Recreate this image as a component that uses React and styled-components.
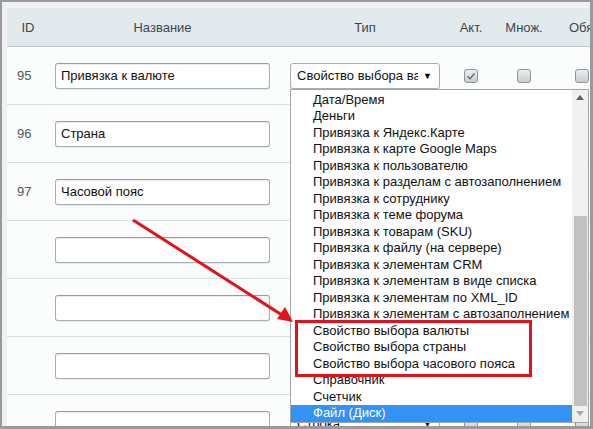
import React from "react";
import styled, { createGlobalStyle } from "styled-components";

const Global = createGlobalStyle`
  html, body { margin: 0; padding: 0; background: #9a9a9a; }
  body { font-family: "Liberation Sans", Arial, sans-serif; }
`;

const Frame = styled.div`
  position: relative;
  box-sizing: border-box;
  width: 593px;
  height: 429px;
  overflow: hidden;
  border-style: solid;
  border-color: #9a9a9a;
  border-width: 2px 3px 3px 2px;
  background: #eef2f4;
  padding: 6px 0 0 5px;
`;

const Table = styled.div`
  width: 640px;
  background: #fbfcfc;
`;

const COLS = "42px 227px 178px 34px 72px 87px";

const HeaderRow = styled.div`
  display: grid;
  grid-template-columns: ${COLS};
  height: 38px;
  align-items: center;
  background: #e3eaed;
  border-bottom: 1px solid #bcc6cb;
`;

const HeadCell = styled.div`
  font-size: 13px;
  color: #3b464d;
  text-align: ${(p) => (p.$left ? "left" : "center")};
  padding-left: ${(p) => p.$pad || 0}px;
  white-space: nowrap;
`;

const Row = styled.div`
  display: grid;
  grid-template-columns: ${COLS};
  height: 57px;
  align-items: center;
  border-bottom: 1px solid #d9e0e3;
`;

const IdCell = styled.div`
  font-size: 13px;
  color: #555;
  padding-left: 10px;
`;

const NameCell = styled.div`
  padding-left: 6px;
`;

const TextInput = styled.div`
  box-sizing: border-box;
  width: 215px;
  height: 26px;
  background: #fff;
  border: 1px solid #a5aeb5;
  border-top-color: #949da4;
  border-radius: 3px;
  box-shadow: inset 0 1px 1px rgba(0, 0, 0, 0.08), 0 1px 0 #e6ebee;
  font-size: 13px;
  line-height: 24px;
  color: #111;
  padding-left: 5px;
`;

const TypeCell = styled.div`
  position: relative;
  padding-left: 14px;
`;

const SelectBox = styled.div`
  box-sizing: border-box;
  width: 150px;
  height: 26px;
  background: #fff;
  border: 1px solid #a5aeb5;
  border-radius: 3px;
  box-shadow: 0 1px 0 #e6ebee;
  display: flex;
  align-items: center;
  font-size: 13px;
  color: #111;
  padding-left: 6px;
`;

const SelectText = styled.span`
  width: 121px;
  overflow: hidden;
  white-space: nowrap;
  flex-shrink: 0;
`;

const SelectArrow = styled.span`
  font-size: 9px;
  margin-left: 5px;
  color: #000;
`;

const CheckCell = styled.div`
  display: flex;
  justify-content: ${(p) => p.$justify || "center"};
  padding-left: ${(p) => p.$pad || 0}px;
`;

const Check = styled.div`
  box-sizing: border-box;
  width: 14px;
  height: 14px;
  border-radius: 3px;
  border: 1px solid #8c949a;
  background: linear-gradient(#eceef0, #c9cdd0);
  display: flex;
  align-items: center;
  justify-content: center;
`;

const Dropdown = styled.div`
  position: absolute;
  left: 14px;
  top: calc(50% + 13px);
  z-index: 5;
  box-sizing: border-box;
  width: 299px;
  height: 334px;
  background: #fff;
  border: 1px solid #a4a4a4;
  display: flex;
`;

const OptionList = styled.div`
  flex: 1;
  padding-top: 2px;
  overflow: hidden;
`;

const Option = styled.div`
  height: 16.5px;
  line-height: 16.5px;
  font-size: 13px;
  color: ${(p) => (p.$active ? "#fff" : "#111")};
  background: ${(p) => (p.$active ? "#3392f5" : "transparent")};
  padding-left: 22px;
  white-space: nowrap;
`;

const Scrollbar = styled.div`
  width: 16px;
  background: #f0f0f0;
  display: flex;
  flex-direction: column;
  align-items: center;
`;

const ScrollBtn = styled.div`
  height: 16px;
  width: 16px;
  display: flex;
  align-items: center;
  justify-content: center;
`;

const Track = styled.div`
  flex: 1;
  width: 100%;
  display: flex;
  flex-direction: column;
  justify-content: flex-end;
  align-items: center;
`;

const Thumb = styled.div`
  width: 13px;
  height: 190px;
  background: #c1c1c1;
`;

const Annotation = styled.div`
  position: absolute;
  left: 293px;
  top: 318px;
  width: 237px;
  height: 57px;
  box-sizing: border-box;
  border: 3px solid #e2121b;
  z-index: 6;
`;

const ArrowSvg = styled.svg`
  position: absolute;
  left: -2px;
  top: -2px;
  z-index: 6;
  pointer-events: none;
`;

const options = [
  "Дата/Время",
  "Деньги",
  "Привязка к Яндекс.Карте",
  "Привязка к карте Google Maps",
  "Привязка к пользователю",
  "Привязка к разделам с автозаполнением",
  "Привязка к сотруднику",
  "Привязка к теме форума",
  "Привязка к товарам (SKU)",
  "Привязка к файлу (на сервере)",
  "Привязка к элементам CRM",
  "Привязка к элементам в виде списка",
  "Привязка к элементам по XML_ID",
  "Привязка к элементам с автозаполнением",
  "Свойство выбора валюты",
  "Свойство выбора страны",
  "Свойство выбора часового пояса",
  "Справочник",
  "Счетчик",
  "Файл (Диск)",
];

const rows = [
  { id: "95", name: "Привязка к валюте", type: "Свойство выбора валюты", act: true, open: true },
  { id: "96", name: "Страна", type: "Свойство выбора страны", act: true },
  { id: "97", name: "Часовой пояс", type: "Свойство выбора часового пояса", act: true },
  { id: "", name: "", type: "Строка" },
  { id: "", name: "", type: "Строка" },
  { id: "", name: "", type: "Строка" },
  { id: "", name: "", type: "Строка" },
];

const CheckMark = () => (
  <svg width="10" height="10" viewBox="0 0 10 10">
    <path d="M1.5 5.2 L4 7.6 L8.6 2.4" fill="none" stroke="#6b7276" strokeWidth="1.5" />
  </svg>
);

const Box = ({ checked }) => <Check>{checked && <CheckMark />}</Check>;

export default function App() {
  return (
    <>
      <Global />
      <Frame>
        <Table>
          <HeaderRow>
            <HeadCell>ID</HeadCell>
            <HeadCell>Название</HeadCell>
            <HeadCell>Тип</HeadCell>
            <HeadCell>Акт.</HeadCell>
            <HeadCell>Множ.</HeadCell>
            <HeadCell $left $pad={9}>Обязат.</HeadCell>
          </HeaderRow>
          {rows.map((r, i) => (
            <Row key={i}>
              <IdCell>{r.id}</IdCell>
              <NameCell>
                <TextInput>{r.name}</TextInput>
              </NameCell>
              <TypeCell>
                <SelectBox>
                  <SelectText>{r.type}</SelectText>
                  <SelectArrow>▼</SelectArrow>
                </SelectBox>
                {r.open && (
                  <Dropdown>
                    <OptionList>
                      {options.map((o) => (
                        <Option key={o} $active={o === "Файл (Диск)"}>
                          {o}
                        </Option>
                      ))}
                    </OptionList>
                    <Scrollbar>
                      <ScrollBtn>
                        <svg width="8" height="5" viewBox="0 0 8 5">
                          <path d="M0 5 L4 0 L8 5 Z" fill="#606060" />
                        </svg>
                      </ScrollBtn>
                      <Track>
                        <Thumb />
                      </Track>
                      <ScrollBtn>
                        <svg width="8" height="5" viewBox="0 0 8 5">
                          <path d="M0 0 L8 0 L4 5 Z" fill="#a8a8a8" />
                        </svg>
                      </ScrollBtn>
                    </Scrollbar>
                  </Dropdown>
                )}
              </TypeCell>
              <CheckCell>
                <Box checked={r.act} />
              </CheckCell>
              <CheckCell>
                <Box />
              </CheckCell>
              <CheckCell $justify="flex-start" $pad={15}>
                <Box />
              </CheckCell>
            </Row>
          ))}
        </Table>
        <Annotation />
        <ArrowSvg width="593" height="429" viewBox="0 0 593 429">
          <line x1="133" y1="220" x2="282" y2="315" stroke="#e2121b" strokeWidth="3" />
          <path d="M293 322 L277 319 L285 307 Z" fill="#e2121b" />
        </ArrowSvg>
      </Frame>
    </>
  );
}
